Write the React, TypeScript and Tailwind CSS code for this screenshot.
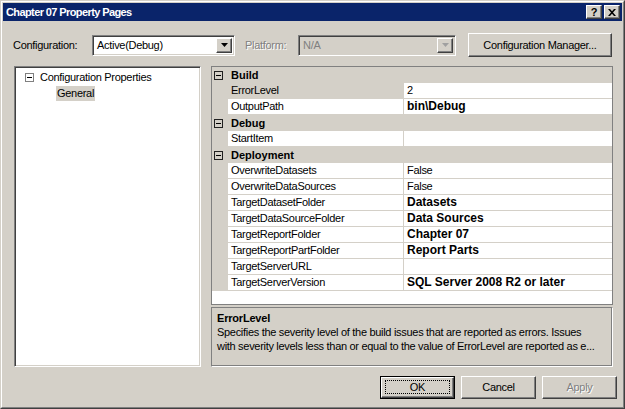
import React from "react";

const raised =
  "border border-t-white border-l-white border-r-[#404040] border-b-[#404040] shadow-[inset_-1px_-1px_0_#808080,inset_1px_1px_0_#d4d0c8]";
const sunken =
  "border border-t-[#808080] border-l-[#808080] border-r-white border-b-white shadow-[inset_1px_1px_0_#404040,inset_-1px_-1px_0_#d4d0c8]";

type Row =
  | { kind: "cat"; label: string }
  | { kind: "prop"; name: string; value?: string; bold?: boolean; selected?: boolean };

const rows: Row[] = [
  { kind: "cat", label: "Build" },
  { kind: "prop", name: "ErrorLevel", value: "2", selected: true },
  { kind: "prop", name: "OutputPath", value: "bin\\Debug", bold: true },
  { kind: "cat", label: "Debug" },
  { kind: "prop", name: "StartItem", value: "" },
  { kind: "cat", label: "Deployment" },
  { kind: "prop", name: "OverwriteDatasets", value: "False" },
  { kind: "prop", name: "OverwriteDataSources", value: "False" },
  { kind: "prop", name: "TargetDatasetFolder", value: "Datasets", bold: true },
  { kind: "prop", name: "TargetDataSourceFolder", value: "Data Sources", bold: true },
  { kind: "prop", name: "TargetReportFolder", value: "Chapter 07", bold: true },
  { kind: "prop", name: "TargetReportPartFolder", value: "Report Parts", bold: true },
  { kind: "prop", name: "TargetServerURL", value: "" },
  { kind: "prop", name: "TargetServerVersion", value: "SQL Server 2008 R2 or later", bold: true },
];

function DownArrow({ color = "#000" }: { color?: string }) {
  return (
    <svg width="7" height="4" viewBox="0 0 7 4">
      <path d="M0 0h7L3.5 4z" fill={color} />
    </svg>
  );
}

function Combo({
  text,
  width,
  disabled,
}: {
  text: string;
  width: string;
  disabled?: boolean;
}) {
  return (
    <div
      className={`${sunken} ${width} h-[21px] flex items-stretch p-[2px] ${
        disabled ? "bg-[#d4d0c8]" : "bg-white"
      }`}
    >
      <div
        className={`flex-1 flex items-center pl-[2px] ${
          disabled ? "text-[#808080]" : "text-black"
        }`}
      >
        {text}
      </div>
      <div className={`${raised} w-[16px] bg-[#d4d0c8] flex items-center justify-center`}>
        <DownArrow color={disabled ? "#a0a0a0" : "#000"} />
      </div>
    </div>
  );
}

function TreeMinus() {
  return (
    <div className="w-[9px] h-[9px] border border-[#808080] bg-white flex items-center justify-center">
      <div className="w-[5px] h-px bg-black" />
    </div>
  );
}

function GridMinus() {
  return (
    <div className="w-[9px] h-[9px] border border-[#202020] flex items-center justify-center">
      <div className="w-[5px] h-px bg-black" />
    </div>
  );
}

function Button({
  label,
  isDefault,
  disabled,
}: {
  label: string;
  isDefault?: boolean;
  disabled?: boolean;
}) {
  const inner = (
    <div
      className={`${raised} relative h-full w-full bg-[#d4d0c8] flex items-center justify-center ${
        disabled ? "text-[#808080] [text-shadow:1px_1px_0_#fff]" : "text-black"
      }`}
    >
      {isDefault && (
        <div className="absolute left-[3px] right-[3px] top-[2px] bottom-[3px] border border-dotted border-black" />
      )}
      <span className="relative">{label}</span>
    </div>
  );
  if (isDefault) {
    return <div className="w-[75px] h-[23px] border border-black">{inner}</div>;
  }
  return <div className="w-[75px] h-[23px]">{inner}</div>;
}

export default function App() {
  return (
    <div className="w-[625px] h-[409px] bg-[#d4d0c8] border border-t-[#d4d0c8] border-l-[#d4d0c8] border-r-[#404040] border-b-[#404040] font-['Liberation_Sans',Arial,sans-serif] text-[11px] tracking-[-0.3px] text-black overflow-hidden">
      <div className="h-full w-full border border-t-white border-l-white border-r-[#808080] border-b-[#808080] p-px flex flex-col">
        {/* Title bar */}
        <div className="h-[18px] bg-[#0a246a] flex items-center pl-[3px] pr-[2px]">
          <div className="flex-1 text-white font-bold text-[11px] tracking-[-0.6px]">
            Chapter 07 Property Pages
          </div>
          <div className="flex gap-[2px]">
            <div className={`${raised} w-[16px] h-[14px] bg-[#d4d0c8] flex items-center justify-center font-bold text-[11px] leading-none`}>
              ?
            </div>
            <div className={`${raised} w-[16px] h-[14px] bg-[#d4d0c8] flex items-center justify-center`}>
              <svg width="8" height="7" viewBox="0 0 8 7">
                <path d="M0 0h2l2 2.3L6 0h2L5 3.5 8 7H6L4 4.7 2 7H0l3-3.5z" fill="#000" />
              </svg>
            </div>
          </div>
        </div>

        {/* Configuration row */}
        <div className="mt-[12px] h-[24px] flex items-center px-[10px]">
          <div className="w-[79px]">Configuration:</div>
          <Combo text="Active(Debug)" width="w-[143px]" />
          <div className="w-[53px] ml-[10px] text-[#808080] [text-shadow:1px_1px_0_#fff]">
            Platform:
          </div>
          <Combo text="N/A" width="w-[158px]" disabled />
          <div className={`${raised} ml-[12px] w-[144px] h-[24px] bg-[#d4d0c8] flex items-center justify-center`}>
            Configuration Manager...
          </div>
        </div>

        {/* Main area */}
        <div className="mt-[9px] h-[301px] flex pl-[11px]">
          {/* Tree */}
          <div className={`${sunken} w-[187px] h-full bg-white p-[2px]`}>
            <div className="h-[16px] flex items-center">
              <div className="ml-[8px]">
                <TreeMinus />
              </div>
              <div className="ml-[6px]">Configuration Properties</div>
            </div>
            <div className="h-[16px] flex items-center">
              <div className="ml-[39px] px-[1px] h-[15px] flex items-center bg-[#d4d0c8]">
                General
              </div>
            </div>
          </div>

          {/* Right column */}
          <div className="ml-[10px] w-[402px] flex flex-col">
            <div className="h-[239px] border border-[#808080] bg-white flex flex-col">
              {rows.map((r, i) =>
                r.kind === "cat" ? (
                  <div key={i} className="h-[16px] flex items-center bg-[#d4d0c8]">
                    <div className="w-[16px] pl-[2px] flex items-center">
                      <GridMinus />
                    </div>
                    <div className="pl-[3px] font-bold tracking-normal">{r.label}</div>
                  </div>
                ) : (
                  <div key={i} className="h-[16px] flex">
                    <div className="w-[16px] bg-[#d4d0c8]" />
                    <div
                      className={`w-[175px] border-b border-[#d4d0c8] pl-[3px] leading-[15px] whitespace-nowrap overflow-hidden ${
                        r.selected ? "bg-[#d4d0c8]" : "bg-white"
                      }`}
                    >
                      {r.name}
                    </div>
                    <div className="w-px bg-[#d4d0c8]" />
                    <div
                      className={`flex-1 border-b border-[#d4d0c8] pl-[3px] leading-[15px] whitespace-nowrap overflow-hidden ${
                        r.bold ? "font-bold text-[12px] tracking-normal" : ""
                      }`}
                    >
                      {r.value}
                    </div>
                  </div>
                )
              )}
            </div>
            <div className="mt-[2px] h-[60px] border border-t-[#808080] border-l-[#808080] border-r-white border-b-white shadow-[inset_-1px_-1px_0_#808080] bg-[#d4d0c8] pl-[5px] pt-[3px] leading-[14px]">
              <div className="font-bold tracking-[-0.2px]">ErrorLevel</div>
              <div className="whitespace-nowrap">
                Specifies the severity level of the build issues that are reported as errors. Issues
              </div>
              <div className="whitespace-nowrap">
                with severity levels less than or equal to the value of ErrorLevel are reported as e...
              </div>
            </div>
          </div>
        </div>

        {/* Buttons */}
        <div className="mt-[9px] flex justify-end gap-[6px] pr-[5px]">
          <Button label="OK" isDefault />
          <Button label="Cancel" />
          <Button label="Apply" disabled />
        </div>
      </div>
    </div>
  );
}
